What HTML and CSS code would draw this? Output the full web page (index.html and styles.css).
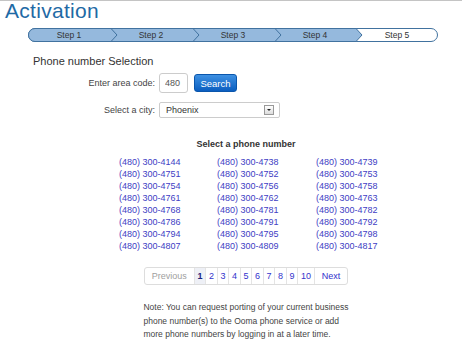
FILE: index.html
```html
<!DOCTYPE html>
<html lang="en">

<head>
    <meta charset="UTF-8">
    <meta name="viewport" content="width=device-width, initial-scale=1.0">
    <title>Activation</title>
    <link rel="stylesheet" href="styles.css">
</head>

<body>
    <div class="page">
        <h1 class="title">Activation</h1>

        <!-- Wizard steps -->
        <div class="steps">
            <svg class="steps-bg" viewBox="0 0 410 14" width="410" height="14">
                <rect x="0.5" y="0.5" width="409" height="13" rx="6.5" ry="6.5" fill="#fff" stroke="#41729f"/>
                <path d="M7 0.5 H328 L334 7 L328 13.5 H7 A6.5 6.5 0 0 1 7 0.5 Z" fill="#95b9dd" stroke="#41729f"/>
                <path d="M83 0.5 L89 7 L83 13.5 M165 0.5 L171 7 L165 13.5 M247 0.5 L253 7 L247 13.5" fill="none" stroke="#41729f"/>
            </svg>
            <div class="step">Step 1</div>
            <div class="step">Step 2</div>
            <div class="step">Step 3</div>
            <div class="step">Step 4</div>
            <div class="step">Step 5</div>
        </div>

        <h2 class="section-title">Phone number Selection</h2>

        <div class="form">
            <label for="area">Enter area code:</label>
            <div class="field-row">
                <input type="text" id="area" value="480">
                <button class="btn-search">Search</button>
            </div>
            <label>Select a city:</label>
            <div class="select">
                <span>Phoenix</span>
                <span class="select-arrow"></span>
            </div>
        </div>

        <div class="panel">
            <h3 class="panel-title">Select a phone number</h3>
            <div class="numbers">
                <a href="#">(480) 300-4144</a>
                <a href="#">(480) 300-4738</a>
                <a href="#">(480) 300-4739</a>
                <a href="#">(480) 300-4751</a>
                <a href="#">(480) 300-4752</a>
                <a href="#">(480) 300-4753</a>
                <a href="#">(480) 300-4754</a>
                <a href="#">(480) 300-4756</a>
                <a href="#">(480) 300-4758</a>
                <a href="#">(480) 300-4761</a>
                <a href="#">(480) 300-4762</a>
                <a href="#">(480) 300-4763</a>
                <a href="#">(480) 300-4768</a>
                <a href="#">(480) 300-4781</a>
                <a href="#">(480) 300-4782</a>
                <a href="#">(480) 300-4786</a>
                <a href="#">(480) 300-4791</a>
                <a href="#">(480) 300-4792</a>
                <a href="#">(480) 300-4794</a>
                <a href="#">(480) 300-4795</a>
                <a href="#">(480) 300-4798</a>
                <a href="#">(480) 300-4807</a>
                <a href="#">(480) 300-4809</a>
                <a href="#">(480) 300-4817</a>
            </div>

            <div class="pager-wrap">
                <div class="pager">
                    <span class="pager-prev">Previous</span>
                    <span class="pager-num current">1</span>
                    <a class="pager-num" href="#">2</a>
                    <a class="pager-num" href="#">3</a>
                    <a class="pager-num" href="#">4</a>
                    <a class="pager-num" href="#">5</a>
                    <a class="pager-num" href="#">6</a>
                    <a class="pager-num" href="#">7</a>
                    <a class="pager-num" href="#">8</a>
                    <a class="pager-num" href="#">9</a>
                    <a class="pager-num" href="#">10</a>
                    <a class="pager-next" href="#">Next</a>
                </div>
            </div>

            <p class="note">Note: You can request porting of your current business<br>
                phone number(s) to the Ooma phone service or add<br>
                more phone numbers by logging in at a later time.</p>
        </div>
    </div>
</body>

</html>
```

FILE: styles.css
```css
body {
    margin: 0;
    font-family: "Liberation Sans", Arial, sans-serif;
    background-color: #fff;
    color: #333;
}

.page {
    border-top: 1px solid #c4c4c4;
    height: 346px;
    overflow: hidden;
}

.title {
    margin: 0;
    padding-left: 5px;
    font-size: 21px;
    font-weight: normal;
    line-height: 20px;
    letter-spacing: 0.3px;
    color: #1f6aa5;
}

/* wizard bar */
.steps {
    position: relative;
    display: flex;
    width: 410px;
    height: 14px;
    margin: 7px 0 0 28px;
}

.steps-bg {
    position: absolute;
    top: 0;
    left: 0;
}

.step {
    position: relative;
    flex: 1;
    text-align: center;
    font-size: 8.5px;
    line-height: 14px;
    color: #333;
}

.section-title {
    margin: 12px 0 0 33px;
    font-size: 11px;
    font-weight: normal;
    line-height: 14px;
    color: #333;
}

/* area code + city */
.form {
    display: grid;
    grid-template-columns: 120px auto;
    column-gap: 4px;
    row-gap: 9px;
    align-items: center;
    margin: 5px 0 0 35px;
    font-size: 9px;
}

.form label {
    text-align: right;
    color: #444;
}

.field-row {
    display: flex;
    align-items: center;
    gap: 6px;
}

.field-row input {
    width: 29px;
    height: 20px;
    box-sizing: border-box;
    padding: 0 0 0 5px;
    border: 1px solid #ccc;
    border-radius: 3px;
    font-family: inherit;
    font-size: 9px;
    color: #555;
}

.btn-search {
    width: 43px;
    height: 18px;
    padding: 0;
    border: 1px solid #0a56ac;
    border-radius: 3px;
    background: linear-gradient(#3d90e2, #0b5ec0);
    color: #fff;
    font-family: inherit;
    font-size: 9.5px;
}

.select {
    display: flex;
    align-items: center;
    justify-content: space-between;
    width: 121px;
    height: 16px;
    box-sizing: border-box;
    padding: 0 5px 0 6px;
    border: 1px solid #ccc;
    border-radius: 2px;
    color: #333;
}

.select-arrow {
    position: relative;
    width: 8px;
    height: 8px;
    border: 1px solid #999;
    background: linear-gradient(#fff, #ddd);
}

.select-arrow::after {
    content: "";
    position: absolute;
    left: 2px;
    top: 3px;
    border-left: 2px solid transparent;
    border-right: 2px solid transparent;
    border-top: 2px solid #222;
}

/* number picker */
.panel {
    width: 300px;
    margin: 20px 0 0 96px;
}

.panel-title {
    margin: 0;
    text-align: center;
    font-size: 9px;
    line-height: 12px;
    color: #333;
}

.numbers {
    display: grid;
    grid-template-columns: 98px 99px 80px;
    margin: 6px 0 0 23px;
    font-size: 9px;
    line-height: 12px;
}

.numbers a {
    color: #4040c4;
    text-decoration: none;
    white-space: nowrap;
}

.pager-wrap {
    margin-top: 13px;
    text-align: center;
}

.pager {
    display: inline-flex;
    height: 18px;
    box-sizing: border-box;
    border: 1px solid #ddd;
    border-radius: 3px;
    font-size: 9px;
    line-height: 16px;
}

.pager a,
.pager span {
    text-decoration: none;
    color: #3333cc;
}

.pager-prev {
    padding: 0 7px;
    color: #a0a0a0 !important;
}

.pager-num {
    padding: 0 2.75px;
    border-left: 1px solid #e4e4e4;
}

.pager-num.current {
    font-weight: bold;
    color: #1a237e !important;
    background-color: #eef0f6;
}

.pager-next {
    padding: 0 7px;
    border-left: 1px solid #e4e4e4;
}

.note {
    width: max-content;
    margin: 16px auto 0;
    font-size: 8.5px;
    line-height: 13.5px;
    white-space: nowrap;
    color: #444;
}
```
